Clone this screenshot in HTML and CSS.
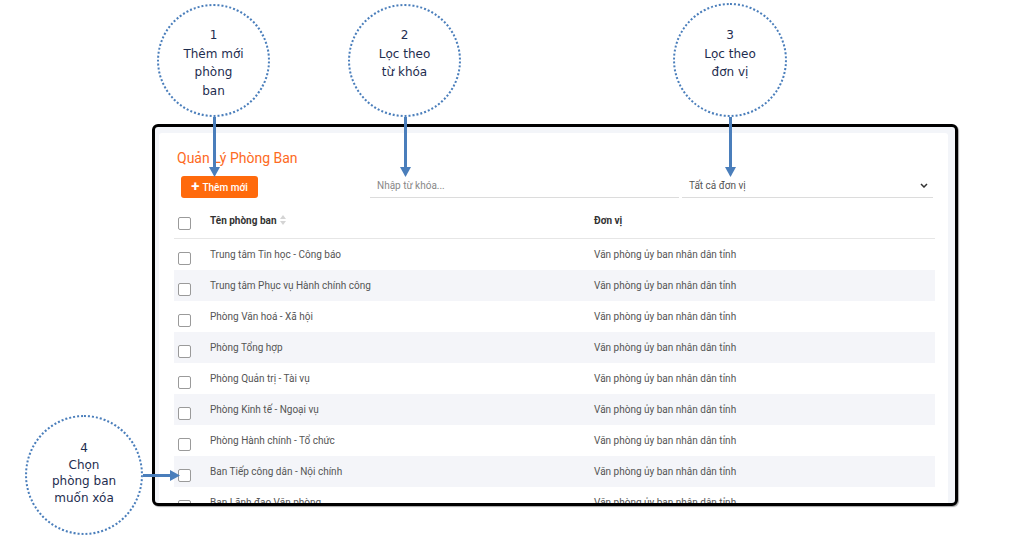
FILE: index.html
```html
<!DOCTYPE html>
<html lang="vi">
<head>
<meta charset="utf-8">
<title>Quản Lý Phòng Ban</title>
<link rel="stylesheet" href="styles.css">
</head>
<body>
<div class="canvas">
  <div class="frame">
    <div class="card">
      <h1 class="title">Quản Lý Phòng Ban</h1>
      <div class="toolbar">
        <div class="tool-btn"><button class="btn-add"><span class="plus">+</span> Thêm mới</button></div>
        <div class="field"><input class="search" type="text" placeholder="Nhập từ khóa..."></div>
        <div class="field select">
          <span>Tất cả đơn vị</span>
          <svg class="chev" width="8" height="5" viewBox="0 0 8 5"><path d="M1 1 L4 4 L7 1" fill="none" stroke="#333" stroke-width="1.5"/></svg>
        </div>
      </div>
      <div class="table">
        <div class="row head">
          <div class="c-check"><input type="checkbox" class="cb"></div>
          <div class="c-name">Tên phòng ban <svg class="sort" width="6" height="10" viewBox="0 0 6 10"><path d="M3 0 L6 4 L0 4Z" fill="#d4d4d4"/><path d="M3 10 L6 6 L0 6Z" fill="#d4d4d4"/></svg></div>
          <div class="c-unit">Đơn vị</div>
        </div>
        <div class="row"><div class="c-check"><input type="checkbox" class="cb"></div><div class="c-name">Trung tâm Tin học - Công báo</div><div class="c-unit">Văn phòng ủy ban nhân dân tỉnh</div></div>
        <div class="row"><div class="c-check"><input type="checkbox" class="cb"></div><div class="c-name">Trung tâm Phục vụ Hành chính công</div><div class="c-unit">Văn phòng ủy ban nhân dân tỉnh</div></div>
        <div class="row"><div class="c-check"><input type="checkbox" class="cb"></div><div class="c-name">Phòng Văn hoá - Xã hội</div><div class="c-unit">Văn phòng ủy ban nhân dân tỉnh</div></div>
        <div class="row"><div class="c-check"><input type="checkbox" class="cb"></div><div class="c-name">Phòng Tổng hợp</div><div class="c-unit">Văn phòng ủy ban nhân dân tỉnh</div></div>
        <div class="row"><div class="c-check"><input type="checkbox" class="cb"></div><div class="c-name">Phòng Quản trị - Tài vụ</div><div class="c-unit">Văn phòng ủy ban nhân dân tỉnh</div></div>
        <div class="row"><div class="c-check"><input type="checkbox" class="cb"></div><div class="c-name">Phòng Kinh tế - Ngoại vụ</div><div class="c-unit">Văn phòng ủy ban nhân dân tỉnh</div></div>
        <div class="row"><div class="c-check"><input type="checkbox" class="cb"></div><div class="c-name">Phòng Hành chính - Tổ chức</div><div class="c-unit">Văn phòng ủy ban nhân dân tỉnh</div></div>
        <div class="row"><div class="c-check"><input type="checkbox" class="cb"></div><div class="c-name">Ban Tiếp công dân - Nội chính</div><div class="c-unit">Văn phòng ủy ban nhân dân tỉnh</div></div>
        <div class="row"><div class="c-check"><input type="checkbox" class="cb"></div><div class="c-name">Ban Lãnh đạo Văn phòng</div><div class="c-unit">Văn phòng ủy ban nhân dân tỉnh</div></div>
      </div>
    </div>
  </div>

  <div class="callout c1"><div>1</div><div>Thêm mới</div><div>phòng</div><div>ban</div></div>
  <div class="callout c2"><div>2</div><div>Lọc theo</div><div>từ khóa</div></div>
  <div class="callout c3"><div>3</div><div>Lọc theo</div><div>đơn vị</div></div>
  <div class="callout c4"><div>4</div><div>Chọn</div><div>phòng ban</div><div>muốn xóa</div></div>

  <svg class="arrows" width="1029" height="555" viewBox="0 0 1029 555">
    <g fill="#4a7ebb" stroke="#4a7ebb">
      <line x1="214.5" y1="117" x2="214.5" y2="168" stroke-width="3"/>
      <polygon points="209,167 220,167 214.5,177" stroke="none"/>
      <line x1="405.5" y1="117" x2="405.5" y2="168" stroke-width="3"/>
      <polygon points="400,167 411,167 405.5,177" stroke="none"/>
      <line x1="730.5" y1="117" x2="730.5" y2="168" stroke-width="3"/>
      <polygon points="725,167 736,167 730.5,177" stroke="none"/>
      <line x1="143" y1="475.5" x2="171" y2="475.5" stroke-width="3"/>
      <polygon points="170,470 170,481 180,475.5" stroke="none"/>
    </g>
  </svg>
</div>
</body>
</html>
```

FILE: styles.css
```css
* { box-sizing: border-box; }
html, body { margin: 0; padding: 0; background: #fff; }
body { font-family: Roboto, "Liberation Sans", sans-serif; }

.canvas {
  position: relative;
  width: 1029px;
  height: 555px;
  overflow: hidden;
  padding: 124px 0 0 152px;
}

.frame {
  width: 806px;
  height: 382px;
  border: 3px solid #000;
  border-radius: 6px;
  background: #f3f5f9;
  padding: 6px 7px 0 4px;
  box-shadow: 1px 1px 1px rgba(0,0,0,0.35);
}

.card {
  background: #fff;
  height: 100%;
  overflow: hidden;
  border-radius: 3px 3px 0 0;
  padding: 15px 13px 0 15px;
}

.title {
  margin: 0 0 0 3px;
  font-size: 14px;
  line-height: 20px;
  font-weight: 400;
  color: #fd6a23;
}

.toolbar {
  display: grid;
  grid-template-columns: 193px 309px 251px;
  column-gap: 3px;
  align-items: end;
  margin-top: 5px;
}

.tool-btn { padding-left: 7px; }

.btn-add {
  height: 22px;
  width: 77px;
  border: none;
  border-radius: 3px;
  background: #ff6a0c;
  color: #fff;
  font-family: Roboto, "Liberation Sans", sans-serif;
  font-size: 10px;
  font-weight: 500;
  padding: 0;
  display: flex;
  align-items: center;
  justify-content: center;
  gap: 3px;
}
.plus { font-size: 15px; font-weight: 700; line-height: 1; margin-top: -2px; }

.field {
  height: 25px;
  border-bottom: 1px solid #dcdcdc;
  display: flex;
  align-items: center;
  padding: 0 7px;
  font-size: 10px;
  color: #555;
}
.search {
  border: none;
  outline: none;
  padding: 0;
  width: 100%;
  font-family: Roboto, "Liberation Sans", sans-serif;
  font-size: 10px;
  color: #555;
  background: transparent;
}
.search::placeholder { color: #888; }
.select { justify-content: space-between; }
.chev { margin-right: -2px; }

.table { margin-top: 4px; }

.row {
  display: grid;
  grid-template-columns: 26px 384px 1fr;
  height: 31px;
  align-items: center;
  font-size: 10px;
  color: #555;
}
.row:nth-child(odd) { background: #f4f5f9; }
.row.head {
  height: 37px;
  background: #fff;
  border-bottom: 1px solid #e6e6e6;
  font-weight: 700;
  color: #333;
}

.c-check { padding-left: 4px; display: flex; }
.c-name, .c-unit { padding-left: 10px; white-space: nowrap; }
.c-name { display: flex; align-items: center; gap: 3px; }

.cb {
  appearance: none;
  -webkit-appearance: none;
  width: 13px;
  height: 13px;
  margin: 7px 0 0 0;
  border: 1.5px solid #9a9a9a;
  border-radius: 2px;
  background: #fff;
}
.row.head .cb { margin-top: 7px; }

.callout {
  position: absolute;
  border: 2px dotted #4a7ebb;
  border-radius: 50%;
  background: #fff;
  font-family: "DejaVu Sans", sans-serif;
  font-size: 12px;
  color: #1e2d4f;
  text-align: center;
  line-height: 18.5px;
}
.c1 { left: 157px; top: 4px; width: 113px; height: 113px; padding-top: 20px; }
.c2 { left: 348px; top: 4px; width: 113px; height: 113px; padding-top: 20px; }
.c3 { left: 673px; top: 3px; width: 114px; height: 114px; padding-top: 21px; }
.c4 { left: 25px; top: 415px; width: 118px; height: 120px; padding-top: 23px; line-height: 16.5px; }

.arrows { position: absolute; left: 0; top: 0; pointer-events: none; }
```
